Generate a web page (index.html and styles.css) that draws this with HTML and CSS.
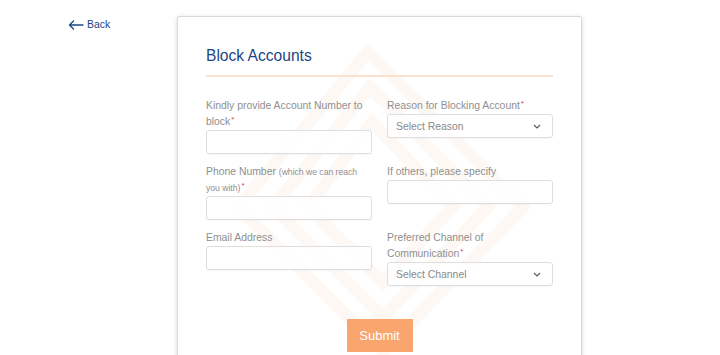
FILE: index.html
```html
<!DOCTYPE html>
<html lang="en">
<head>
<meta charset="utf-8">
<title>Block Accounts</title>
<link rel="stylesheet" href="styles.css">
</head>
<body>
<div class="page">
  <a class="back" href="#">
    <svg class="back-icon" width="16" height="10" viewBox="0 0 16 10" fill="none" stroke="#1d4584" stroke-width="1.3" stroke-linecap="round" stroke-linejoin="round"><path d="M15 5H1.5M5.5 1L1.5 5l4 4"/></svg>
    <span>Back</span>
  </a>
  <section class="card">
    <svg class="watermark" width="330" height="330" viewBox="0 0 330 330" fill="none" stroke="#f7a46c" stroke-width="12">
      <path d="M150 15 L305 170 L165 315 L20 170 Z"/>
      <path d="M152 50 L270 170 L165 280 L55 170 Z"/>
      <path d="M154 85 L235 170 L165 245 L90 170 Z"/>
    </svg>
    <h1 class="title">Block Accounts</h1>
    <div class="rule"></div>
    <form class="form">
      <div class="field">
        <label class="label">Kindly provide Account Number to block<span class="req">*</span></label>
        <input class="input" type="text">
      </div>
      <div class="field">
        <label class="label">Reason for Blocking Account<span class="req">*</span></label>
        <div class="select"><span>Select Reason</span><svg width="8" height="5" viewBox="0 0 8 5" fill="none" stroke="#555" stroke-width="1.1"><path d="M1 1l3 3 3-3"/></svg></div>
      </div>
      <div class="field">
        <label class="label">Phone Number <small class="hint">(which we can reach you with)</small><span class="req">*</span></label>
        <input class="input" type="text">
      </div>
      <div class="field">
        <label class="label">If others, please specify</label>
        <input class="input" type="text">
      </div>
      <div class="field">
        <label class="label">Email Address</label>
        <input class="input" type="text">
      </div>
      <div class="field">
        <label class="label">Preferred Channel of Communication<span class="req">*</span></label>
        <div class="select"><span>Select Channel</span><svg width="8" height="5" viewBox="0 0 8 5" fill="none" stroke="#555" stroke-width="1.1"><path d="M1 1l3 3 3-3"/></svg></div>
      </div>
      <div class="actions">
        <button class="submit" type="button">Submit</button>
      </div>
    </form>
  </section>
</div>
</body>
</html>
```
FILE: styles.css
```css
* { box-sizing: border-box; }
html, body { margin: 0; padding: 0; background: #fff; }
body { font-family: "Liberation Sans", Arial, sans-serif; height: 355px; overflow: hidden; }
.page { display: flex; align-items: flex-start; padding: 16px 0 0 68px; }
.back {
  flex: 0 0 109px; display: flex; align-items: center; gap: 3px; padding-top: 1px;
  color: #1d4584; text-decoration: none; font-size: 10.4px; line-height: 16px;
}
.back-icon { display: block; }
.card {
  position: relative; width: 405px; min-height: 345px;
  border: 1px solid #d9d9d9; border-radius: 2px;
  box-shadow: 0 1px 5px rgba(0,0,0,0.14);
  padding: 29px 28px 0 28px; background: #fff;
}
.watermark { position: absolute; left: 40px; top: 20px; opacity: 0.07; pointer-events: none; }
.title {
  position: relative; margin: 0; font-weight: 400; font-size: 15.6px; line-height: 20px;
  color: #1d4584;
}
.rule { position: relative; height: 2px; background: #fbe1cf; margin-top: 9px; }
.form {
  position: relative; display: grid; grid-template-columns: 166px 166px;
  column-gap: 15px; row-gap: 10px; align-items: start; margin-top: 21px;
}
.field { display: flex; flex-direction: column; }
.label { display: block; font-size: 10.4px; line-height: 16px; color: #8f8f8f; }
.hint { font-size: 8.6px; line-height: 0; }
.req { color: #d8455a; font-size: 8px; line-height: 0; vertical-align: 3px; margin-left: 1px; }
.input, .select {
  height: 24px; border: 1px solid #dedede; border-radius: 3px; background: rgba(255,255,255,0.85);
  box-shadow: 0 1px 1px rgba(0,0,0,0.03);
}
.input { width: 100%; padding: 0 8px; font: inherit; outline: none; }
.select {
  display: flex; align-items: center; justify-content: space-between;
  padding: 0 11px 0 8px; font-size: 10.4px; color: #8a8a8a;
}
.actions { grid-column: 1 / -1; display: flex; justify-content: center; margin-top: 23px; }
.submit {
  width: 66px; height: 33px; border: none; border-radius: 1px; background: #f8a56e;
  color: #fff; font-family: "Liberation Sans", Arial, sans-serif; font-size: 13px; padding: 0;
}
```
